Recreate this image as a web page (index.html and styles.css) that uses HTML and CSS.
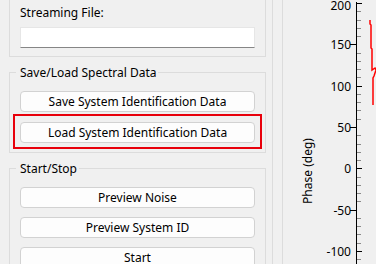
FILE: index.html
```html
<!DOCTYPE html>
<html lang="en">
<head>
  <meta charset="UTF-8" />
  <title>System Identification</title>
  <link rel="stylesheet" href="styles.css">
</head>
<body>
  <div class="window">
    <div class="controls">
      <div class="group clipped">
        <div class="field-label">Streaming File:</div>
        <input class="path" type="text">
      </div>

      <fieldset class="group spectral">
        <legend>Save/Load Spectral Data</legend>
        <div class="stack">
          <button>Save System Identification Data</button>
          <div class="highlight">
            <button>Load System Identification Data</button>
          </div>
        </div>
      </fieldset>

      <fieldset class="group">
        <legend>Start/Stop</legend>
        <div class="stack">
          <button>Preview Noise</button>
          <button>Preview System ID</button>
          <button>Start</button>
        </div>
      </fieldset>
    </div>

    <div class="splitter"></div>

    <div class="plot">
      <svg width="93" height="264" viewBox="0 0 93 264">
        <g class="minor">
          <path d="M74 11.5h4M74 20.5h4M74 28.5h4M74 36.5h4M74 53.5h4M74 61.5h4M74 69.5h4M74 77.5h4M74 94.5h4M74 102.5h4M74 110.5h4M74 119.5h4M74 135.5h4M74 144.5h4M74 152.5h4M74 160.5h4M74 177.5h4M74 185.5h4M74 193.5h4M74 201.5h4M74 218.5h4M74 226.5h4M74 234.5h4M74 243.5h4M74 259.5h4"/>
        </g>
        <g class="major">
          <path d="M73.5 2v262"/>
          <path d="M74 3.5h5M74 86.5h5M74 168.5h5M74 251.5h5"/>
          <path d="M67 44.5h6M67 127.5h6M67 210.5h6"/>
        </g>
        <g class="labels">
          <text x="68" y="9.5">200</text>
          <text x="68" y="49">150</text>
          <text x="68" y="90.5">100</text>
          <text x="68" y="131.5">50</text>
          <text x="68" y="173">0</text>
          <text x="68" y="214.5">-50</text>
          <text x="68" y="255.5">-100</text>
        </g>
        <text class="axis-title" x="29" y="171" transform="rotate(-90 29 171)">Phase (deg)</text>
        <polyline class="trace" points="87,20 87,24 88,25 88,48 89,49 89,70 92,68 93,70 91,76 90,78 90,105"/>
      </svg>
    </div>
  </div>
</body>
</html>
```

FILE: styles.css
```css
body {
  margin: 0;
  background-color: #f0f0f0;
  font-family: 'Noto Sans', sans-serif;
  font-size: 12px;
  color: #000;
  overflow: hidden;
}
.window {
  display: flex;
  height: 264px;
}
.controls {
  flex: none;
  width: 257px;
  padding-left: 9px;
}
.group {
  margin: 8px 0 0;
  padding: 11px 10px 9px;
  border: 1px solid #dcdcdc;
  min-inline-size: 0;
}
.group.clipped {
  margin-top: 0;
  padding-top: 5px;
  padding-bottom: 8px;
  border-top: none;
}
legend {
  margin-left: -4px;
  padding: 0 2px 0 4px;
  line-height: 15px;
}
.field-label {
  line-height: 15px;
  margin-bottom: 7px;
}
.path {
  display: block;
  box-sizing: border-box;
  width: 100%;
  height: 21px;
  margin: 0;
  padding: 0;
  background: #fff;
  border: 1px solid #e6e6e6;
  border-bottom-color: #868686;
}
.stack {
  display: flex;
  flex-direction: column;
  gap: 9px;
}
.spectral .stack {
  gap: 10px;
}
button {
  height: 21px;
  padding: 0;
  font: inherit;
  line-height: 19px;
  color: #000;
  background-color: #fdfdfd;
  border: 1px solid #d2d2d2;
  border-radius: 4px;
}
.highlight {
  display: flex;
  flex-direction: column;
  margin: -8px -7px -6px;
  padding: 6px 5px 4px;
  border: 2px solid #e8000b;
}
.splitter {
  flex: none;
  box-sizing: border-box;
  width: 11px;
  margin-left: 6px;
  border-left: 1px solid #dcdcdc;
  border-right: 1px solid #dcdcdc;
}
.plot {
  flex: 1;
}
.plot svg {
  display: block;
}
.minor path {
  stroke: #8a8a8a;
  stroke-width: 1;
  fill: none;
}
.major path {
  stroke: #000;
  stroke-width: 1;
  fill: none;
}
.labels text {
  font-size: 12px;
  text-anchor: end;
  fill: #000;
}
.axis-title {
  font-size: 12px;
  text-anchor: middle;
  fill: #000;
}
.trace {
  fill: none;
  stroke: #ff0000;
  stroke-width: 1.5;
}
```
